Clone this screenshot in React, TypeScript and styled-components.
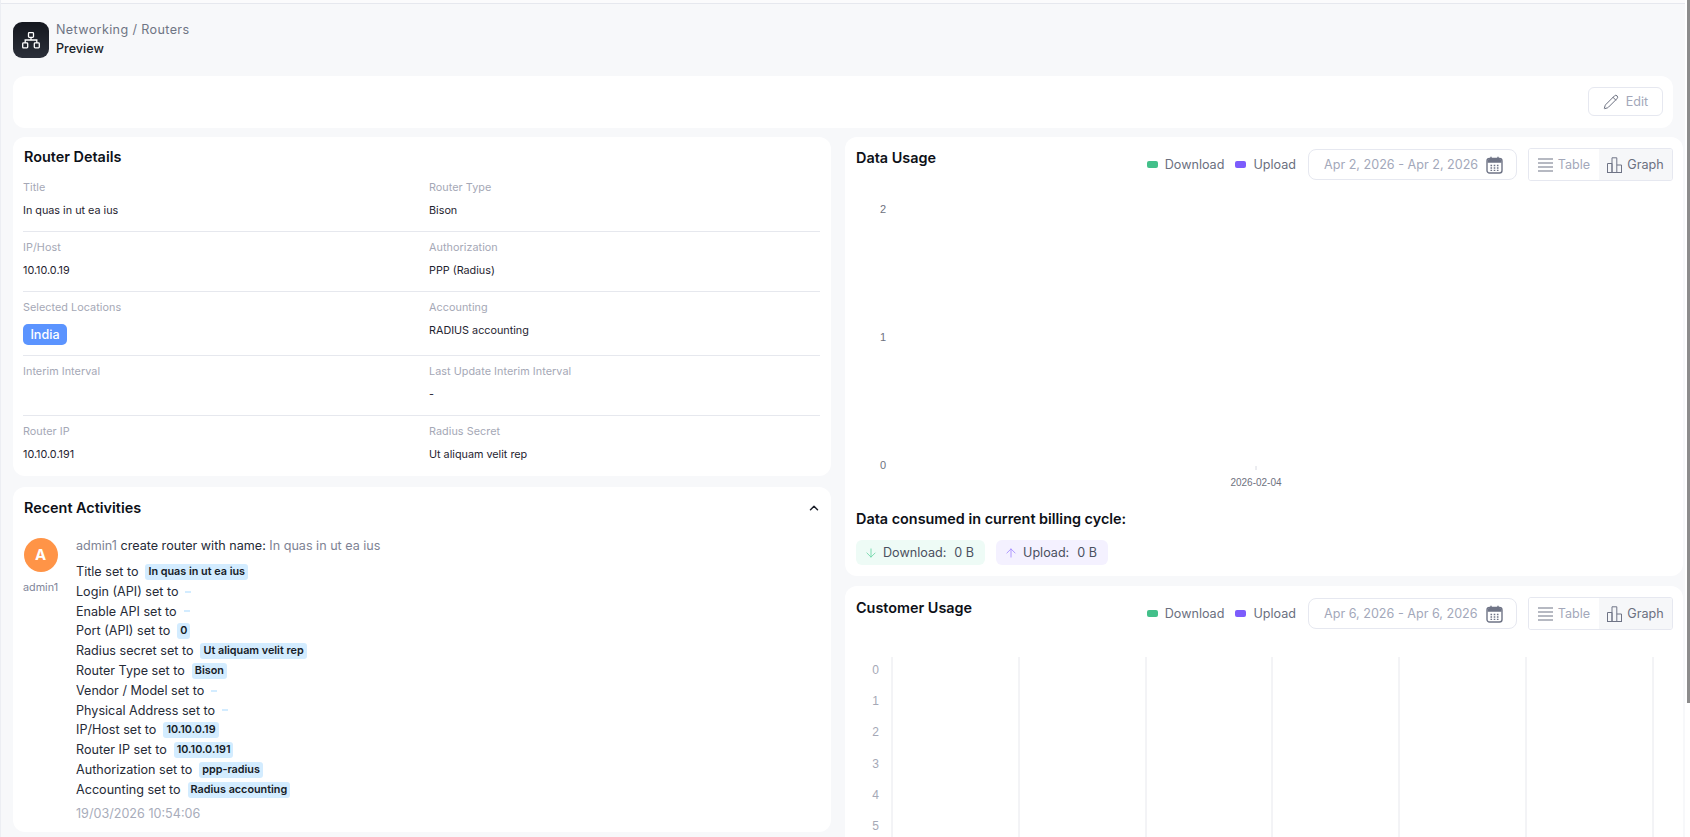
import styled, { createGlobalStyle } from "styled-components";
import { ArrowDown, ArrowUp, ChevronUp, Pencil } from "lucide-react";

const GlobalStyle = createGlobalStyle`
	html, body {
		margin: 0;
		height: 100%;
		overflow: hidden;
		background: #f7f8fa;
		font-family: Inter, "Liberation Sans", sans-serif;
	}
	* {
		box-sizing: border-box;
	}
`;

const Shell = styled.div`
	height: 100vh;
	display: flex;
`;

const Scroller = styled.div`
	flex: 1;
	min-width: 0;
	overflow-y: auto;
	scrollbar-width: none;
	border-left: 1px solid #eceef3;
	background: #f7f8fa;
`;

const ScrollRail = styled.div`
	width: 5px;
	padding-left: 2px;
	background: #ffffff;
`;

const ScrollThumb = styled.div`
	height: 703px;
	background: #8c8c8c;
`;

const TopStrip = styled.div`
	height: 4px;
	background: #fbfbfc;
	border-bottom: 1px solid #e6e8ee;
`;

const Page = styled.main`
	padding: 18px 12px 11px;
`;

const Header = styled.header`
	display: flex;
	align-items: center;
	gap: 7px;
	margin-bottom: 18px;
`;

const Logo = styled.div`
	width: 36px;
	height: 36px;
	border-radius: 9px;
	background: linear-gradient(180deg, #14171e 0%, #2b2f39 100%);
	display: flex;
	align-items: center;
	justify-content: center;
`;

const Crumbs = styled.div`
	display: flex;
	flex-direction: column;
	gap: 1px;
	margin-top: -2px;
`;

const CrumbPath = styled.div`
	font-size: 12.6px;
	line-height: 18px;
	letter-spacing: 0.37px;
	color: #6f7584;
`;

const CrumbCurrent = styled.div`
	font-size: 12.6px;
	line-height: 17px;
	font-weight: 500;
	color: #1b1f29;
`;

const Card = styled.section`
	background: #ffffff;
	border-radius: 12px;
`;

const Toolbar = styled(Card)`
	height: 52px;
	padding: 11px 10px;
	display: flex;
	justify-content: flex-end;
	margin-bottom: 9px;
`;

const EditButton = styled.button`
	width: 75px;
	height: 29px;
	background: #ffffff;
	border: 1px solid #e6e8f0;
	border-radius: 6px;
	display: flex;
	align-items: center;
	justify-content: center;
	gap: 7px;
	font: inherit;
	font-size: 12.6px;
	color: #a3a8ba;
	padding: 0;

	svg {
		color: #6b7080;
	}
`;

const Columns = styled.div`
	display: grid;
	grid-template-columns: 818px 1fr;
	column-gap: 14px;
	align-items: start;
`;

const Column = styled.div<{ $gap: number }>`
	display: flex;
	flex-direction: column;
	gap: ${(p) => p.$gap}px;
`;

const CardTitle = styled.h2<{ $top?: number }>`
	margin: ${(p) => p.$top ?? 0}px 0 0;
	font-size: 14.4px;
	line-height: 20px;
	font-weight: 600;
	color: #0d1017;
`;

const DetailsCard = styled(Card)`
	padding: 10px 11px 13px 10px;
	height: 339px;

	${CardTitle} {
		margin: 0 0 5px 1px;
	}
`;

const DetailRow = styled.div<{ $last?: boolean }>`
	display: grid;
	grid-template-columns: 406px 1fr;
	padding: 8px 0 ${(p) => (p.$last ? 0 : 12)}px;
	border-bottom: ${(p) => (p.$last ? "none" : "1px solid #e6e8ee")};
`;

const DetailLabel = styled.div`
	font-size: 10.8px;
	line-height: 16px;
	letter-spacing: 0.05px;
	color: #a5a8b6;
`;

const DetailValue = styled.div`
	margin-top: 7px;
	font-size: 10.8px;
	line-height: 16px;
	min-height: 16px;
	color: #1f2430;
`;

const LocationChip = styled.span`
	display: inline-block;
	margin: 8px 0 -2px;
	width: 44px;
	height: 21px;
	border-radius: 5px;
	background: #5b94ff;
	color: #ffffff;
	font-size: 12.6px;
	font-weight: 500;
	line-height: 21px;
	text-align: center;
`;

const ActivitiesCard = styled(Card)`
	padding: 11px 10px 0;
	height: 345px;
`;

const ActivitiesHead = styled.div`
	display: flex;
	align-items: center;
	justify-content: space-between;
	padding: 0 0 0 1px;
	margin-bottom: 18px;
	color: #1b1f29;
`;

const Activity = styled.div`
	display: grid;
	grid-template-columns: 35px 1fr;
	column-gap: 18px;
`;

const AvatarColumn = styled.div`
	display: flex;
	flex-direction: column;
	align-items: center;
	gap: 8px;
	padding-top: 2px;
`;

const Avatar = styled.div`
	width: 34px;
	height: 34px;
	border-radius: 50%;
	background: #ff9447;
	color: #ffffff;
	font-size: 15px;
	font-weight: 700;
	line-height: 34px;
	text-align: center;
`;

const AvatarName = styled.div`
	font-size: 10.8px;
	line-height: 16px;
	color: #81869a;
`;

const ActivityHeadline = styled.div`
	font-size: 12.6px;
	line-height: 20px;
	color: #262b37;
	margin-bottom: 6px;
`;

const Muted = styled.span`
	color: #7e8394;
`;

const ChangeRow = styled.div`
	font-size: 12.6px;
	line-height: 19.8px;
	color: #262b37;
	display: flex;
	align-items: center;
	height: 19.8px;
`;

const Badge = styled.span`
	margin-left: 7px;
	padding: 0 3px;
	height: 16px;
	line-height: 16px;
	border-radius: 3px;
	background: #d3ecff;
	font-size: 10.8px;
	font-weight: 600;
	color: #161b26;
`;

const EmptyBadge = styled.span`
	margin-left: 7px;
	width: 6px;
	height: 2px;
	background: #d3ecff;
`;

const Stamp = styled.div`
	margin-top: 4px;
	font-size: 12.6px;
	line-height: 20px;
	color: #a8acba;
`;

const ChartCard = styled(Card)`
	padding: 0 10px 11px 11px;
`;

const ChartHead = styled.div`
	display: flex;
	justify-content: space-between;
	align-items: flex-start;
	padding-top: 10px;
`;

const Controls = styled.div`
	display: flex;
	align-items: center;
	margin-top: 1px;
`;

const Legend = styled.span`
	display: flex;
	align-items: center;
	gap: 7px;
	margin-right: 11px;
	font-size: 12.6px;
	color: #6b7080;
`;

const Swatch = styled.i<{ $color: string }>`
	width: 11px;
	height: 7px;
	border-radius: 2px;
	background: ${(p) => p.$color};
`;

const DateInput = styled.div`
	width: 209px;
	height: 31px;
	margin: 0 11px 0 1px;
	padding: 0 13px 0 15px;
	display: flex;
	align-items: center;
	justify-content: space-between;
	border: 1px solid #e6e8f0;
	border-radius: 8px;
	font-size: 12.6px;
	white-space: nowrap;
	color: #a3a8ba;
`;

const Toggle = styled.div`
	width: 145px;
	height: 33px;
	display: grid;
	grid-template-columns: 70px 1fr;
	border: 1px solid #e6e8f0;
	border-radius: 3px;
	overflow: hidden;
`;

const ToggleItem = styled.div<{ $active?: boolean }>`
	display: flex;
	align-items: center;
	justify-content: center;
	gap: 5px;
	font-size: 12.6px;
	background: ${(p) => (p.$active ? "#f6f7f9" : "#ffffff")};
	color: ${(p) => (p.$active ? "#6b7080" : "#a3a8ba")};
`;

const ChartSvg = styled.svg<{ $top: number }>`
	display: block;
	margin: ${(p) => p.$top}px 0 0 -11px;
`;

const UsageAxis = styled.text<{ $small?: boolean }>`
	font-family: "Liberation Sans", Arial, sans-serif;
	font-size: ${(p) => (p.$small ? 10 : 11)}px;
	fill: #6e7280;
`;

const CustomerAxis = styled.text`
	font-family: "Liberation Sans", Arial, sans-serif;
	font-size: 12px;
	fill: #a5a8b6;
`;

const SummaryTitle = styled.h3`
	margin: 13px 0 11px;
	font-size: 14.4px;
	line-height: 20px;
	font-weight: 600;
	color: #0d1017;
`;

const SummaryRow = styled.div`
	display: flex;
	gap: 11px;
`;

const SummaryChip = styled.div<{ $bg: string; $icon: string }>`
	height: 25px;
	padding: 0 11px 0 8px;
	display: flex;
	align-items: center;
	gap: 5px;
	border-radius: 6px;
	background: ${(p) => p.$bg};
	font-size: 12.6px;
	color: #4a5060;

	svg {
		color: ${(p) => p.$icon};
	}
	b {
		font-weight: 400;
		margin-left: 3px;
	}
`;

const NetworkIcon = () => (
	<svg width="20" height="20" viewBox="0 0 20 20" fill="none" stroke="#ffffff" strokeWidth="1.3">
		<rect x="7.5" y="2.7" width="5" height="4.6" rx="0.8" />
		<rect x="1.7" y="12.9" width="5" height="5" rx="0.8" />
		<rect x="13.3" y="12.9" width="5" height="5" rx="0.8" />
		<path d="M10 7.3V10M4.2 12.9V10H15.8V12.9" />
	</svg>
);

const CalendarIcon = () => (
	<svg width="17" height="18" viewBox="0 0 17 18" fill="none">
		<rect x="1" y="2.5" width="15" height="14.5" rx="2.5" stroke="#6f7486" strokeWidth="1.4" />
		<path d="M1.5 6.7V5a2 2 0 0 1 2-2h10a2 2 0 0 1 2 2v1.7z" fill="#6f7486" />
		<path d="M5 .8v3M12 .8v3" stroke="#6f7486" strokeWidth="1.4" />
		<path
			d="M4.5 9.5h1.6M7.7 9.5h1.6M10.9 9.5h1.6M4.5 12h1.6M7.7 12h1.6M10.9 12h1.6M4.5 14.4h1.6M7.7 14.4h1.6M10.9 14.4h1.6"
			stroke="#6f7486"
			strokeWidth="1.3"
		/>
	</svg>
);

const LinesIcon = () => (
	<svg width="15" height="14" viewBox="0 0 15 14" fill="none" stroke="#6f7486" strokeWidth="1.2">
		<path d="M0 1h15M0 5h15M0 9h15M0 13h15" />
	</svg>
);

const BarsIcon = () => (
	<svg width="15" height="16" viewBox="0 0 15 16" fill="none" stroke="#6f7486" strokeWidth="1">
		<path d="M.5 15.5V6.5H5V15.5M5 15.5V.8H9.8V15.5M9.8 8H14.5V15.5M0 15.5H15" />
	</svg>
);

const details: { label: string; value?: string; label2: string; value2: string; chip?: string }[] = [
	{ label: "Title", value: "In quas in ut ea ius", label2: "Router Type", value2: "Bison" },
	{ label: "IP/Host", value: "10.10.0.19", label2: "Authorization", value2: "PPP (Radius)" },
	{ label: "Selected Locations", chip: "India", label2: "Accounting", value2: "RADIUS accounting" },
	{ label: "Interim Interval", label2: "Last Update Interim Interval", value2: "-" },
	{ label: "Router IP", value: "10.10.0.191", label2: "Radius Secret", value2: "Ut aliquam velit rep" },
];

const changes: [string, string][] = [
	["Title", "In quas in ut ea ius"],
	["Login (API)", ""],
	["Enable API", ""],
	["Port (API)", "0"],
	["Radius secret", "Ut aliquam velit rep"],
	["Router Type", "Bison"],
	["Vendor / Model", ""],
	["Physical Address", ""],
	["IP/Host", "10.10.0.19"],
	["Router IP", "10.10.0.191"],
	["Authorization", "ppp-radius"],
	["Accounting", "Radius accounting"],
];

const ChartControls = ({ range }: { range: string }) => (
	<Controls>
		<Legend>
			<Swatch $color="#43c08a" />
			Download
		</Legend>
		<Legend>
			<Swatch $color="#7c5cfc" />
			Upload
		</Legend>
		<DateInput>
			{range}
			<CalendarIcon />
		</DateInput>
		<Toggle>
			<ToggleItem>
				<LinesIcon />
				Table
			</ToggleItem>
			<ToggleItem $active>
				<BarsIcon />
				Graph
			</ToggleItem>
		</Toggle>
	</Controls>
);

const customerLines = [47, 174, 301, 427, 554, 681, 808];

export default function App() {
	return (
		<Shell>
			<GlobalStyle />
			<Scroller>
				<TopStrip />
				<Page>
					<Header>
						<Logo>
							<NetworkIcon />
						</Logo>
						<Crumbs>
							<CrumbPath>Networking / Routers</CrumbPath>
							<CrumbCurrent>Preview</CrumbCurrent>
						</Crumbs>
					</Header>

					<Toolbar>
						<EditButton>
							<Pencil size={16} strokeWidth={1.5} />
							Edit
						</EditButton>
					</Toolbar>

					<Columns>
						<Column $gap={11}>
							<DetailsCard>
								<CardTitle>Router Details</CardTitle>
								{details.map((row, i) => (
									<DetailRow key={row.label} $last={i === details.length - 1}>
										<div>
											<DetailLabel>{row.label}</DetailLabel>
											{row.chip ? (
												<LocationChip>{row.chip}</LocationChip>
											) : (
												<DetailValue>{row.value}</DetailValue>
											)}
										</div>
										<div>
											<DetailLabel>{row.label2}</DetailLabel>
											<DetailValue>{row.value2}</DetailValue>
										</div>
									</DetailRow>
								))}
							</DetailsCard>

							<ActivitiesCard>
								<ActivitiesHead>
									<CardTitle>Recent Activities</CardTitle>
									<ChevronUp size={14} strokeWidth={2.5} />
								</ActivitiesHead>
								<Activity>
									<AvatarColumn>
										<Avatar>A</Avatar>
										<AvatarName>admin1</AvatarName>
									</AvatarColumn>
									<div>
										<ActivityHeadline>
											<Muted>admin1</Muted> create router with name: <Muted>In quas in ut ea ius</Muted>
										</ActivityHeadline>
										{changes.map(([name, value]) => (
											<ChangeRow key={name}>
												{name} set to
												{value ? <Badge>{value}</Badge> : <EmptyBadge />}
											</ChangeRow>
										))}
										<Stamp>19/03/2026 10:54:06</Stamp>
									</div>
								</Activity>
							</ActivitiesCard>
						</Column>

						<Column $gap={10}>
							<ChartCard>
								<ChartHead>
									<CardTitle $top={1}>Data Usage</CardTitle>
									<ChartControls range="Apr 2, 2026 - Apr 2, 2026" />
								</ChartHead>
								<ChartSvg $top={10} width="828" height="305">
									<UsageAxis x="38" y="22" textAnchor="middle">2</UsageAxis>
									<UsageAxis x="38" y="150" textAnchor="middle">1</UsageAxis>
									<UsageAxis x="38" y="278" textAnchor="middle">0</UsageAxis>
									<line x1="411" x2="411" y1="275" y2="279" stroke="#d8dae2" />
									<UsageAxis $small x="411" y="295" textAnchor="middle">
										2026-02-04
									</UsageAxis>
								</ChartSvg>
								<SummaryTitle>Data consumed in current billing cycle:</SummaryTitle>
								<SummaryRow>
									<SummaryChip $bg="#eefbf6" $icon="#6fd6a8">
										<ArrowDown size={14} strokeWidth={1.5} />
										Download: <b>0 B</b>
									</SummaryChip>
									<SummaryChip $bg="#f4f1ff" $icon="#a58cff">
										<ArrowUp size={14} strokeWidth={1.5} />
										Upload: <b>0 B</b>
									</SummaryChip>
								</SummaryRow>
							</ChartCard>

							<ChartCard>
								<ChartHead>
									<CardTitle $top={2}>Customer Usage</CardTitle>
									<ChartControls range="Apr 6, 2026 - Apr 6, 2026" />
								</ChartHead>
								<ChartSvg $top={10} width="828" height="335">
									{customerLines.map((x) => (
										<line key={x} x1={x} x2={x} y1="17" y2="335" stroke="#e7e8ed" />
									))}
									{[0, 1, 2, 3, 4, 5].map((n) => (
										<CustomerAxis key={n} x="34" y={34 + n * 31.2} textAnchor="end">
											{n}
										</CustomerAxis>
									))}
								</ChartSvg>
							</ChartCard>
						</Column>
					</Columns>
				</Page>
			</Scroller>
			<ScrollRail>
				<ScrollThumb />
			</ScrollRail>
		</Shell>
	);
}
